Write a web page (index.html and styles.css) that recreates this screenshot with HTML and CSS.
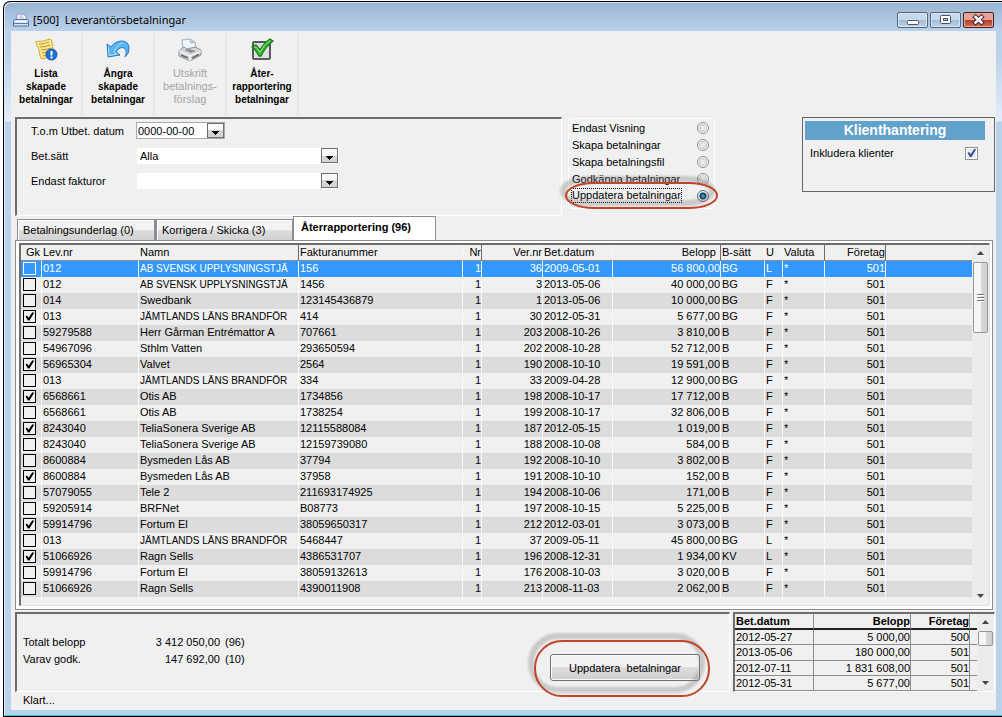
FILE: index.html
```html
<!DOCTYPE html>
<html lang="sv">
<head>
<meta charset="utf-8">
<title>Leverantörsbetalningar</title>
<link rel="stylesheet" href="styles.css">
</head>
<body>
<div class="window">
  <header class="titlebar">
    <svg class="app-icon" width="16" height="14" viewBox="0 0 16 14"><path d="M4 7V1h6l3 2v4" fill="#fff" stroke="#8a96b8"/><path d="M6 3h4M6 5h5" stroke="#9fb0d8"/><path d="M1.500 6.500h13l1 1.500v5h-15V8z" fill="#d5e0f4" stroke="#5a6c9c"/><path d="M1 10.500h14" stroke="#5f78b8"/><path d="M3 8.500h10" stroke="#fff"/></svg>
    <h1 class="title">[500]&nbsp; Leverantörsbetalningar</h1>
    <div class="caption">
      <button class="cap" aria-label="Minimera"><svg width="29" height="14" viewBox="0 0 29 14"><rect x="9.500" y="7.500" width="11" height="4" rx="1" fill="#fff" stroke="#4c5464"/></svg></button>
      <button class="cap" aria-label="Maximera"><svg width="29" height="14" viewBox="0 0 29 14"><rect x="9.500" y="2.500" width="10" height="8" rx="1" fill="#fff" stroke="#4c5464"/><rect x="12.500" y="5.500" width="4" height="2" fill="#b8cce0" stroke="#4c5464"/></svg></button>
      <button class="cap close" aria-label="Stäng"><svg width="29" height="14" viewBox="0 0 29 14"><path d="M11.500 4l6 5.500M17.500 4l-6 5.500" stroke="#4a3038" stroke-width="4.500" stroke-linecap="square"/><path d="M11.500 4l6 5.500M17.500 4l-6 5.500" stroke="#fff" stroke-width="2.400" stroke-linecap="square"/></svg></button>
    </div>
  </header>

  <main class="client">
    <nav class="toolbar">
      <button class="tool">
        <svg width="24" height="24" viewBox="0 0 24 24"><path d="M2 3.500Q9 4 16 1q2 .5 2 3 0 4 2 9 0 4-3 5l-8 3q-3 0-3-3Q5 10 2 5z" fill="#fbe78c" stroke="#d8a93a"/><path d="M5 6q6 0 10-2M6 9q5 0 10-2M7 12q5 0 10-2M8 15l8-2M9 18l5-1.500" fill="none" stroke="#b8923a"/><circle cx="17.500" cy="16.500" r="5.500" fill="#1b70d0" stroke="#1257ad"/><path d="M17.500 13v4.500M17.500 18.500v2" stroke="#fff" stroke-width="2"/></svg>
        <span>Lista<br>skapade<br>betalningar</span>
      </button>
      <button class="tool">
        <svg width="24" height="24" viewBox="0 0 24 24"><path d="M1 6l1 13 12-2-4-3q4-6 8-4 4 2 1 9 5-4 4-10Q22 3 16 3 9 3 5 9z" fill="#58b4f0" stroke="#2a7cc8" stroke-linejoin="round"/><path d="M2.500 9.500l.5 8 8-1.500-3-2Q11 6 17 5" fill="none" stroke="#b5e0fb"/></svg>
        <span>Ångra<br>skapade<br>betalningar</span>
      </button>
      <button class="tool" disabled>
        <svg width="24" height="24" viewBox="0 0 24 24"><path d="M5 11L4 2l8-1 5 3 1 6" fill="#eef5fb" stroke="#9eb0bf"/><path d="M12 1l1 4 4-1" fill="#bcd8ee" stroke="#9eb0bf"/><path d="M1 13l5-4 3 2 8-2 6 3v5l-11 6L1 18z" fill="#d5d8da" stroke="#8d9194" stroke-linejoin="round"/><path d="M1 13l11 5 11-5M12 18v5" fill="none" stroke="#fff"/><path d="M6 12l7 3 5-2-7-2z" fill="#8b9195"/><path d="M3 17l7 3M14 20l7-3.500" stroke="#5f6568" stroke-width="1.500"/></svg>
        <span>Utskrift<br>betalnings-<br>förslag</span>
      </button>
      <button class="tool">
        <svg width="24" height="24" viewBox="0 0 24 24"><rect x="3" y="4" width="17" height="17" rx="1" fill="#dcdfe0" stroke="#575b5e" stroke-width="2"/><path d="M2 9l4-2 4 5Q14 5 20 1l3 2Q15 9 11 18H9Q6 12 2 9z" fill="#3bbf33" stroke="#1d7f1b" stroke-width="1.500" stroke-linejoin="round"/><path d="M4 9.500l2-.8 4 5.300Q14 6 20 2.500" fill="none" stroke="#8fe884"/></svg>
        <span>Åter-<br>rapportering<br>betalningar</span>
      </button>
    </nav>

    <section class="top">
      <form class="filters sunken">
        <label for="datum">T.o.m Utbet. datum</label>
        <div class="datebox"><input id="datum" type="text" value="0000-00-00"><button type="button" class="drop" aria-label="Välj datum"><svg width="15" height="13" viewBox="0 0 15 13"><path d="M4 7h7v1h-1v1H9v1H8v1H7v-1H6V9H5V8H4z"/></svg></button></div>
        <label for="satt">Bet.sätt</label>
        <div class="combo"><select id="satt"><option>Alla</option></select><span class="drop"><svg width="15" height="13" viewBox="0 0 15 13"><path d="M4 7h7v1h-1v1H9v1H8v1H7v-1H6V9H5V8H4z"/></svg></span></div>
        <label for="fakturor">Endast fakturor</label>
        <div class="combo"><select id="fakturor"><option></option></select><span class="drop"><svg width="15" height="13" viewBox="0 0 15 13"><path d="M4 7h7v1h-1v1H9v1H8v1H7v-1H6V9H5V8H4z"/></svg></span></div>
      </form>

      <fieldset class="modes">
        <label><span>Endast Visning</span><input type="radio" name="mode"></label>
        <label><span>Skapa betalningar</span><input type="radio" name="mode"></label>
        <label><span>Skapa betalningsfil</span><input type="radio" name="mode"></label>
        <label><span>Godkänna betalningar</span><input type="radio" name="mode"></label>
        <label><span class="focus">Uppdatera betalningar</span><input type="radio" name="mode" checked></label>
        <svg class="ring ring-mode" width="160" height="40" viewBox="0 0 160 40"><rect class="haze" x="4" y="5" width="149" height="24" rx="26" ry="12"/><rect class="line" x="7" y="9" width="151" height="25" rx="28" ry="12.500"/></svg>
      </fieldset>

      <section class="clients">
        <h2>Klienthantering</h2>
        <label><span>Inkludera klienter</span><input type="checkbox" checked></label>
      </section>
    </section>

    <div class="tabs" role="tablist">
      <button class="tab" role="tab">Betalningsunderlag (0)</button>
      <button class="tab" role="tab">Korrigera / Skicka (3)</button>
      <button class="tab active" role="tab" aria-selected="true">Återrapportering (96)</button>
    </div>

    <section class="panel">
      <div class="listbox">
        <table class="grid">
          <colgroup><col class="c-gk"><col class="c-lev"><col class="c-namn"><col class="c-fakt"><col class="c-nr"><col class="c-ver"><col class="c-dat"><col class="c-bel"><col class="c-bs"><col class="c-u"><col class="c-val"><col class="c-for"><col></colgroup>
          <thead><tr><th class="ctr">Gk</th><th>Lev.nr</th><th>Namn</th><th class="edge">Fakturanummer</th><th class="num">Nr</th><th class="num edge">Ver.nr</th><th>Bet.datum</th><th class="num wide">Belopp</th><th class="edge">B-sätt</th><th>U</th><th>Valuta</th><th class="num edge">Företag</th><th class="edge"></th></tr></thead>
          <tbody>
            <tr class="selected"><td><input type="checkbox" aria-label="Gk"></td><td>012</td><td class="long">AB SVENSK UPPLYSNINGSTJÄ</td><td>156</td><td>1</td><td>36</td><td>2009-05-01</td><td>56 800,00</td><td>BG</td><td>L</td><td>*</td><td>501</td><td></td></tr>
            <tr><td><input type="checkbox" aria-label="Gk"></td><td>012</td><td class="long">AB SVENSK UPPLYSNINGSTJÄ</td><td>1456</td><td>1</td><td>3</td><td>2013-05-06</td><td>40 000,00</td><td>BG</td><td>F</td><td>*</td><td>501</td><td></td></tr>
            <tr><td><input type="checkbox" aria-label="Gk"></td><td>014</td><td>Swedbank</td><td>123145436879</td><td>1</td><td>1</td><td>2013-05-06</td><td>10 000,00</td><td>BG</td><td>F</td><td>*</td><td>501</td><td></td></tr>
            <tr><td><input type="checkbox" aria-label="Gk" checked></td><td>013</td><td class="long">JÄMTLANDS LÄNS BRANDFÖR</td><td>414</td><td>1</td><td>30</td><td>2012-05-31</td><td>5 677,00</td><td>BG</td><td>F</td><td>*</td><td>501</td><td></td></tr>
            <tr><td><input type="checkbox" aria-label="Gk"></td><td>59279588</td><td>Herr Gårman Entrémattor A</td><td>707661</td><td>1</td><td>203</td><td>2008-10-26</td><td>3 810,00</td><td>B</td><td>F</td><td>*</td><td>501</td><td></td></tr>
            <tr><td><input type="checkbox" aria-label="Gk"></td><td>54967096</td><td>Sthlm Vatten</td><td>293650594</td><td>1</td><td>202</td><td>2008-10-28</td><td>52 712,00</td><td>B</td><td>F</td><td>*</td><td>501</td><td></td></tr>
            <tr><td><input type="checkbox" aria-label="Gk" checked></td><td>56965304</td><td>Valvet</td><td>2564</td><td>1</td><td>190</td><td>2008-10-10</td><td>19 591,00</td><td>B</td><td>F</td><td>*</td><td>501</td><td></td></tr>
            <tr><td><input type="checkbox" aria-label="Gk"></td><td>013</td><td class="long">JÄMTLANDS LÄNS BRANDFÖR</td><td>334</td><td>1</td><td>33</td><td>2009-04-28</td><td>12 900,00</td><td>BG</td><td>F</td><td>*</td><td>501</td><td></td></tr>
            <tr><td><input type="checkbox" aria-label="Gk" checked></td><td>6568661</td><td>Otis AB</td><td>1734856</td><td>1</td><td>198</td><td>2008-10-17</td><td>17 712,00</td><td>B</td><td>F</td><td>*</td><td>501</td><td></td></tr>
            <tr><td><input type="checkbox" aria-label="Gk"></td><td>6568661</td><td>Otis AB</td><td>1738254</td><td>1</td><td>199</td><td>2008-10-17</td><td>32 806,00</td><td>B</td><td>F</td><td>*</td><td>501</td><td></td></tr>
            <tr><td><input type="checkbox" aria-label="Gk" checked></td><td>8243040</td><td>TeliaSonera Sverige AB</td><td>12115588084</td><td>1</td><td>187</td><td>2012-05-15</td><td>1 019,00</td><td>B</td><td>F</td><td>*</td><td>501</td><td></td></tr>
            <tr><td><input type="checkbox" aria-label="Gk"></td><td>8243040</td><td>TeliaSonera Sverige AB</td><td>12159739080</td><td>1</td><td>188</td><td>2008-10-08</td><td>584,00</td><td>B</td><td>F</td><td>*</td><td>501</td><td></td></tr>
            <tr><td><input type="checkbox" aria-label="Gk"></td><td>8600884</td><td>Bysmeden Lås AB</td><td>37794</td><td>1</td><td>192</td><td>2008-10-10</td><td>3 802,00</td><td>B</td><td>F</td><td>*</td><td>501</td><td></td></tr>
            <tr><td><input type="checkbox" aria-label="Gk" checked></td><td>8600884</td><td>Bysmeden Lås AB</td><td>37958</td><td>1</td><td>191</td><td>2008-10-10</td><td>152,00</td><td>B</td><td>F</td><td>*</td><td>501</td><td></td></tr>
            <tr><td><input type="checkbox" aria-label="Gk"></td><td>57079055</td><td>Tele 2</td><td>211693174925</td><td>1</td><td>194</td><td>2008-10-06</td><td>171,00</td><td>B</td><td>F</td><td>*</td><td>501</td><td></td></tr>
            <tr><td><input type="checkbox" aria-label="Gk"></td><td>59205914</td><td>BRFNet</td><td>B08773</td><td>1</td><td>197</td><td>2008-10-15</td><td>5 225,00</td><td>B</td><td>F</td><td>*</td><td>501</td><td></td></tr>
            <tr><td><input type="checkbox" aria-label="Gk" checked></td><td>59914796</td><td>Fortum El</td><td>38059650317</td><td>1</td><td>212</td><td>2012-03-01</td><td>3 073,00</td><td>B</td><td>F</td><td>*</td><td>501</td><td></td></tr>
            <tr><td><input type="checkbox" aria-label="Gk"></td><td>013</td><td class="long">JÄMTLANDS LÄNS BRANDFÖR</td><td>5468447</td><td>1</td><td>37</td><td>2009-05-11</td><td>45 800,00</td><td>BG</td><td>L</td><td>*</td><td>501</td><td></td></tr>
            <tr><td><input type="checkbox" aria-label="Gk" checked></td><td>51066926</td><td>Ragn Sells</td><td>4386531707</td><td>1</td><td>196</td><td>2008-12-31</td><td>1 934,00</td><td>KV</td><td>L</td><td>*</td><td>501</td><td></td></tr>
            <tr><td><input type="checkbox" aria-label="Gk"></td><td>59914796</td><td>Fortum El</td><td>38059132613</td><td>1</td><td>176</td><td>2008-10-03</td><td>3 020,00</td><td>B</td><td>F</td><td>*</td><td>501</td><td></td></tr>
            <tr><td><input type="checkbox" aria-label="Gk"></td><td>51066926</td><td>Ragn Sells</td><td>4390011908</td><td>1</td><td>213</td><td>2008-11-03</td><td>2 062,00</td><td>B</td><td>F</td><td>*</td><td>501</td><td></td></tr>
          </tbody>
        </table>
        <div class="scroll"><svg width="7" height="4" viewBox="0 0 7 4"><path d="M0 4l3.500-4L7 4z" fill="#444"/></svg><span class="thumb tall"><i></i><i></i><i></i></span><svg class="last" width="7" height="4" viewBox="0 0 7 4"><path d="M0 0l3.500 4L7 0z" fill="#444"/></svg></div>
      </div>
    </section>

    <section class="bottom">
      <div class="summary sunken">
        <dl class="totals">
          <dt>Totalt belopp</dt><dd>3 412 050,00</dd><dd>(96)</dd>
          <dt>Varav godk.</dt><dd>147 692,00</dd><dd>(10)</dd>
        </dl>
        <div class="action">
          <button class="update">Uppdatera&nbsp; betalningar</button>
          <svg class="ring ring-update" width="186" height="72" viewBox="0 0 186 72"><rect class="haze" x="6" y="8" width="171" height="54" rx="27"/><rect class="line" x="10" y="13" width="174" height="55" rx="27"/></svg>
        </div>
      </div>
      <div class="dates sunken">
        <table class="sums">
          <colgroup><col class="s-dat"><col class="s-bel"><col class="s-for"><col></colgroup>
          <thead><tr><th>Bet.datum</th><th>Belopp</th><th>Företag</th><th></th></tr></thead>
          <tbody>
            <tr><td>2012-05-27</td><td>5 000,00</td><td>500</td><td></td></tr>
            <tr><td>2013-05-06</td><td>180 000,00</td><td>501</td><td></td></tr>
            <tr><td>2012-07-11</td><td>1 831 608,00</td><td>501</td><td></td></tr>
            <tr><td>2012-05-31</td><td>5 677,00</td><td>501</td><td></td></tr>
          </tbody>
        </table>
        <div class="scroll"><svg width="7" height="4" viewBox="0 0 7 4"><path d="M0 4l3.500-4L7 4z" fill="#444"/></svg><span class="thumb"></span><svg class="last" width="7" height="4" viewBox="0 0 7 4"><path d="M0 0l3.500 4L7 0z" fill="#444"/></svg></div>
      </div>
    </section>

    <footer class="status">Klart...</footer>
  </main>
</div>
</body>
</html>
```
FILE: styles.css
```css
:root {
  --face: #f0f0f0;
  --ui: "Liberation Sans", Arial, sans-serif;
}

* { box-sizing: border-box; }

body {
  margin: 0;
  background: #fff;
  color: #000;
  font: 11px/16px var(--ui);
}

button, input, select { font: inherit; color: inherit; }
button { padding: 0; }

.window {
  display: flex;
  flex-direction: column;
  min-height: calc(100vh - 1px);
  margin: 1px 0 0 3px;
  padding: 0 6px 6px 7px;
  border: solid #000;
  border-width: 1px 0 1px 1px;
  border-radius: 7px 0 0 0;
  box-shadow: inset 1px 1px #dce9f6, inset 0 -1px #2fc4dc;
  background: linear-gradient(#98b4d1, #b9d1ea 28px, #b9d1ea 50px, #e3eefa 119px, #b9d1ea 120px);
}

.titlebar {
  display: flex;
  align-items: center;
  height: 29px;
  padding: 0 2px;
}
.title {
  flex: 1;
  margin: 7px 0 0 4px;
  font: 11px/16px "Noto Sans", "Open Sans", sans-serif;
}
.app-icon { margin-top: 6px; }
.caption { display: flex; gap: 2px; margin-top: 7px; }
.cap {
  width: 31px;
  height: 16px;
  border: 1px solid #56677c;
  border-radius: 2px;
  background: linear-gradient(#c5d8ec 50%, #a3bbd5 50%, #bcd2e8);
  box-shadow: inset 0 0 0 1px #d8e6f4;
}
.cap svg { display: block; }
.cap.close {
  border-color: #4d1a20;
  background: linear-gradient(#e5a397 50%, #b83a20 50%, #d0705a);
  box-shadow: inset 0 0 0 1px #eaa898;
}

.client {
  flex: 1;
  display: flex;
  flex-direction: column;
  padding: 3px 1px 0 4px;
  background: var(--face);
}

.toolbar { display: flex; height: 83px; margin-left: -4px; }
.tool {
  display: flex;
  flex-direction: column;
  align-items: center;
  gap: 5px;
  width: 72px;
  height: 82px;
  padding-top: 4px;
  border: 0;
  border-right: 2px solid #e7e7e7;
  background: none;
  font-size: 10px;
  font-weight: bold;
  line-height: 13px;
}
.tool:disabled { font-size: 11px; font-weight: normal; color: #a5a5a5; }

.sunken {
  border: solid;
  border-width: 2px 1px 1px 2px;
  border-color: #6d6d6d #fff #fff #6d6d6d;
}

.top { display: flex; align-items: flex-start; height: 100px; }
.filters {
  flex: 1;
  display: grid;
  grid-template-columns: 105px 1fr;
  grid-auto-rows: 17px;
  row-gap: 8px;
  align-items: center;
  height: 99px;
  padding: 3px 14px;
}
.datebox {
  display: flex;
  width: 89px;
  height: 17px;
  border: 1px solid #aaa;
  background: #fff;
}
.datebox input {
  flex: 1;
  min-width: 0;
  padding: 0 1px;
  border: 0;
  background: none;
}
.drop {
  width: 17px;
  height: 15px;
  border: 1px solid #6f6f6f;
  background: linear-gradient(#fafafa 50%, #d4d4d4 50%);
}
.drop svg { display: block; }
.combo { display: grid; width: 202px; margin-left: 1px; }
.combo > * { grid-area: 1 / 1; }
.combo select {
  appearance: none;
  height: 16px;
  padding: 0 3px;
  border: 0;
  border-radius: 0;
  background: #fff;
}
.combo .drop { place-self: center end; margin-right: 1px; pointer-events: none; }

.modes {
  position: relative;
  width: 147px;
  height: 91px;
  margin: 1px 0 0 6px;
  padding: 0 5px 0 3px;
  border: 1px solid #fff;
  border-radius: 4px;
}
.modes label {
  display: flex;
  align-items: center;
  justify-content: space-between;
  height: 17px;
}
.modes .focus { outline: 1px dotted #000; line-height: 13px; }
.modes input {
  appearance: none;
  width: 12px;
  height: 12px;
  margin: 0;
  border: 1px solid #8e8f8f;
  border-radius: 50%;
  background: radial-gradient(#e9e9e9 30%, #c6c9cc 50%, #f6f6f6 60%);
}
.modes input:checked {
  border-color: #5d6874;
  background: radial-gradient(circle, #4fc3ee 0, #14598a 2px, #103450 3px, #e8eef2 4px);
}
.ring { position: absolute; pointer-events: none; overflow: visible; }
.ring .haze { fill: none; stroke: #777; stroke-opacity: .32; stroke-width: 6px; filter: blur(1px); }
.ring .line { fill: none; stroke: #c0452c; stroke-width: 2px; }
.ring-mode { left: -10px; top: 55px; }

.clients {
  width: 193px;
  height: 75px;
  margin-left: 87px;
  padding: 3px 2px;
  border: 1px solid #666;
}
.clients h2 {
  width: 180px;
  margin: 0;
  background: #61a2ca;
  color: #fff;
  text-align: center;
  font: bold 14px/19px var(--ui);
}
.clients label {
  display: flex;
  align-items: center;
  justify-content: space-between;
  width: 168px;
  margin: 5px 0 0 5px;
}
.clients input {
  appearance: none;
  width: 13px;
  height: 13px;
  margin: 0;
  border: 1px solid #8e8f8f;
  background: #e8ecf2;
  box-shadow: inset 0 0 0 1px #fff;
}
.clients input::before, .grid input::before {
  display: block;
  height: 11px;
  clip-path: polygon(14% 50%, 28% 42%, 42% 62%, 76% 12%, 92% 16%, 50% 86%, 36% 86%);
}
.clients input:checked::before { content: ""; background: #3c4f94; }

.tabs { display: flex; align-items: flex-end; height: 23px; padding-left: 2px; }
.tab {
  width: 138px;
  height: 21px;
  padding: 0 5px;
  border: solid #8c8e94;
  border-width: 1px 1px 0 1px;
  background: linear-gradient(#f3f3f3 50%, #dedede 50%, #d2d2d2);
  box-shadow: inset 1px 1px #fff;
  text-align: left;
}
.tab + .tab { border-left-width: 2px; }
.tab.active {
  width: 143px;
  height: 24px;
  padding: 0 7px 3px;
  border-left-width: 1px;
  background: #fff;
  font-weight: bold;
  z-index: 1;
}

.panel {
  flex: 1;
  display: flex;
  margin-right: 2px;
  padding: 2px 2px 3px 3px;
  border: 1px solid #8c8e94;
  background: #fff;
}
.listbox {
  flex: 1;
  display: flex;
  align-items: stretch;
  justify-content: space-between;
  padding-bottom: 7px;
  border: solid;
  border-width: 2px 1px 1px 2px;
  border-color: #6d6d6d #e3e3e3 #e3e3e3 #6d6d6d;
  background: var(--face);
}
table { border-collapse: separate; border-spacing: 0; table-layout: fixed; }
.grid { flex: 1; width: 100%; align-self: flex-start; }
.c-gk { width: 20px; }
.c-lev { width: 97px; }
.c-namn { width: 160px; }
.c-fakt { width: 164px; }
.c-nr { width: 19px; }
.c-ver { width: 61px; }
.c-dat { width: 70px; }
.c-bel { width: 108px; }
.c-bs { width: 44px; }
.c-u { width: 18px; }
.c-val { width: 42px; }
.c-for { width: 61px; }
.grid th, .grid td {
  height: 16px;
  padding: 0 0 0 1px;
  border-left: 1px solid #fafafa;
  white-space: nowrap;
  text-align: left;
  vertical-align: top;
  font-weight: normal;
  line-height: 15px;
}
.grid th:first-child, .grid td:first-child { border-left: 0; }
.grid th { border-bottom: 1px solid #8c8c8c; }
.grid .long { font-size: 10px; }
.grid .edge { border-left-color: #6d6d6d; }
.grid .ctr { padding-left: 5px; }
.grid .num { text-align: right; }
.grid .wide { padding-right: 4px; }
.grid td:nth-child(5), .grid td:nth-child(6), .grid td:nth-child(8), .grid td:nth-child(12) { text-align: right; }
.grid tbody tr:nth-child(odd) { background: #dcdcdc; }
.grid tbody tr.selected { background: #3399ff; color: #fff; }
.grid input {
  appearance: none;
  display: block;
  width: 13px;
  height: 13px;
  margin: 1px 0 0 1px;
  border: 1px solid #000;
  background: var(--face);
}
.grid input:checked::before { content: ""; background: #000; }
.grid .selected input { border-color: #fff; background: none; }

.scroll {
  flex: none;
  display: flex;
  flex-direction: column;
  align-items: center;
  width: 17px;
  padding-top: 6px;
  background: #ececec;
}
.scroll .last { margin-top: auto; }
.thumb {
  display: flex;
  flex-direction: column;
  align-items: center;
  justify-content: center;
  gap: 1px;
  width: 15px;
  height: 15px;
  margin-top: 7px;
  border: 1px solid #979797;
  border-radius: 2px;
  background: linear-gradient(90deg, #f6f6f6 50%, #dadada 50%, #cfcfcf);
}
.thumb.tall { height: 71px; }
.thumb i { width: 7px; height: 2px; background: #777; border-bottom: 1px solid #fff; }

.bottom { display: flex; gap: 3px; height: 80px; margin-top: 2px; }
.summary { flex: 1; display: flex; justify-content: space-between; padding: 20px 29px 0 6px; }
.totals {
  display: grid;
  grid-template-columns: 100px 92px 1fr;
  grid-auto-rows: 17px;
  column-gap: 5px;
  margin: 0;
}
.totals dt { grid-column: 1; }
.totals dd { margin: 0; }
.totals dd:nth-of-type(odd) { text-align: right; }
.action { position: relative; margin-top: 20px; }
.update {
  width: 150px;
  height: 27px;
  border: 1px solid #707070;
  border-radius: 3px;
  background: linear-gradient(#f2f2f2 48%, #dddddd 50%, #cfcfcf);
  box-shadow: inset 0 0 0 1px #fbfbfb;
}
.ring-update { left: -25px; top: -26px; }

.dates { display: flex; width: 262px; }
.dates .scroll .last { margin-bottom: 6px; }
.sums { flex: 1; }
.s-dat { width: 79px; }
.s-bel { width: 97px; }
.s-for { width: 59px; }
.sums td, .sums th {
  height: 15px;
  padding: 0;
  border: solid #8c8c8c;
  border-width: 0 1px 1px 0;
  text-align: right;
  line-height: 14px;
}
.sums th { height: 16px; border-bottom: 2px solid #222; font-weight: bold; }
.sums td:first-child, .sums th:first-child { padding-left: 1px; text-align: left; }
.sums td:last-child, .sums th:last-child { border-right: 0; }

.status { padding: 0 8px; height: 18px; }
```
